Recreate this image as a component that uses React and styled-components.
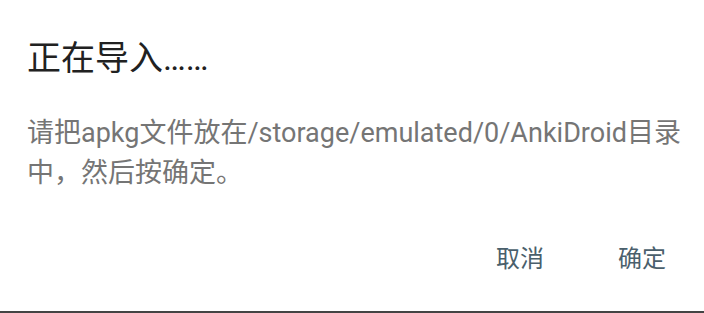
import React from 'react'
import styled, { createGlobalStyle } from 'styled-components'

const GlobalStyle = createGlobalStyle`
    html, body {
        margin:0;
        padding:0;
        background:#fff;
    }
    body{
        font-family: Roboto, "Noto Sans CJK SC", sans-serif;
    }
`;

function App() {
  return (
    <>
    <GlobalStyle />
    <DialogStyled>
        <h1 className='title'>正在导入……</h1>
        <p className='message'>请把apkg文件放在/storage/emulated/0/AnkiDroid目录中，然后按确定。</p>
        <div className='actions'>
            <ActionButton>取消</ActionButton>
            <ActionButton>确定</ActionButton>
        </div>
    </DialogStyled>
    </>
  )
}

const DialogStyled=styled.div`
    width:704px;
    height:313px;
    box-sizing:border-box;
    display:flex;
    flex-direction:column;
    padding:38px 6px 0 27px;
    border-bottom:2px solid #444;
    background:#fff;
    .title{
        margin:0;
        font-size:34px;
        line-height:40px;
        font-weight:400;
        color:#212121;
    }
    .message{
        margin:35px 0 0;
        padding-right:10px;
        font-size:27px;
        line-height:40px;
        color:#757575;
    }
    .actions{
        display:flex;
        justify-content:flex-end;
        gap:10px;
        margin-top:35px;
    }
`;

const ActionButton=styled.button`
    width:112px;
    height:56px;
    border:none;
    background:transparent;
    padding:0;
    font-family:inherit;
    font-size:24px;
    color:#4a5f6c;
`;

export default App
